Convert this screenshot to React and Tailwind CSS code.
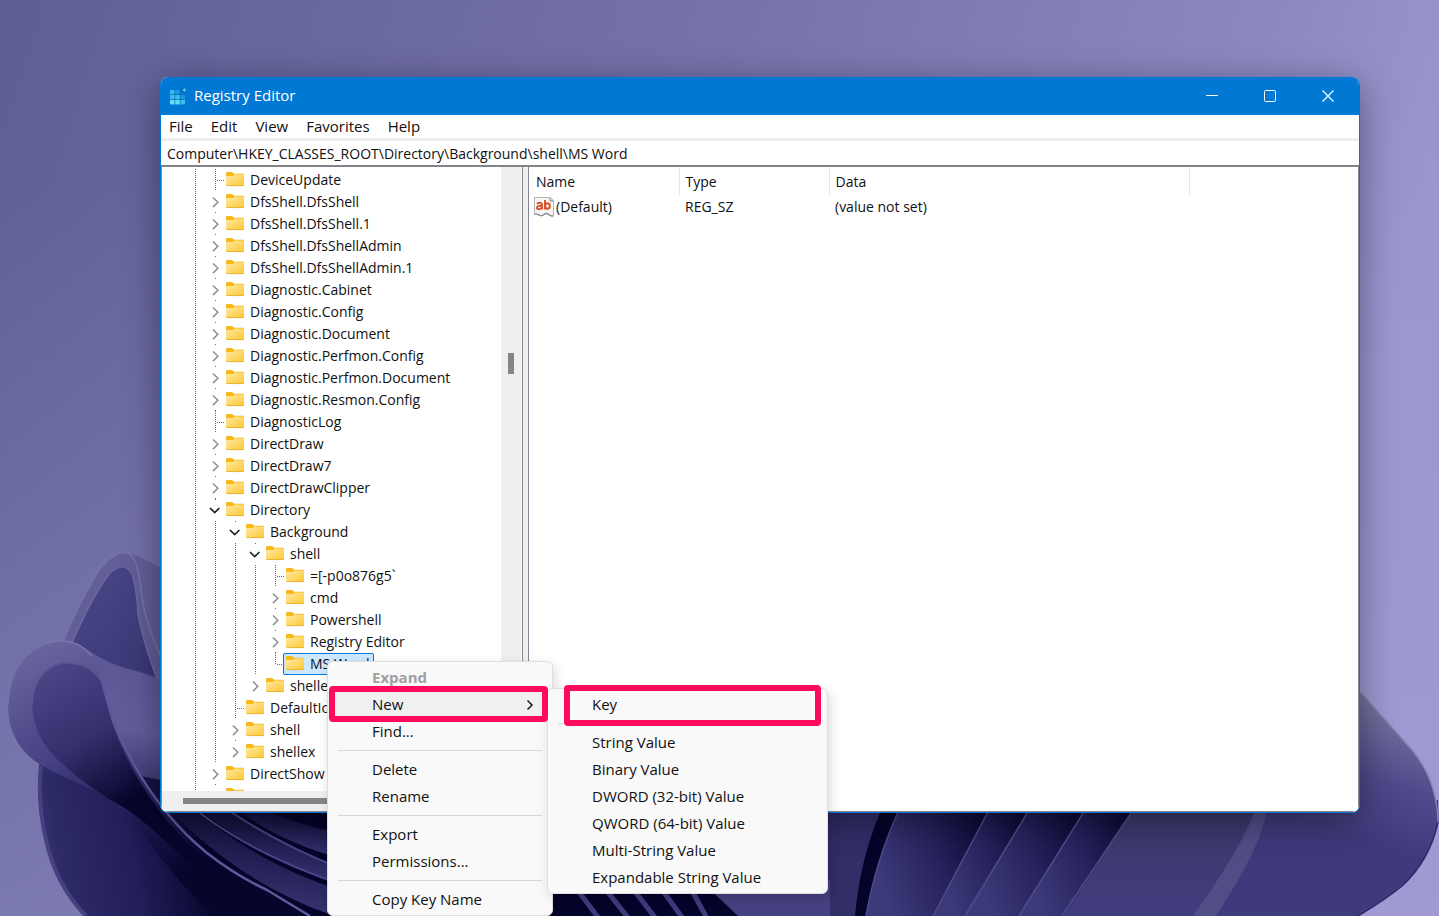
import React, { useState } from "react";

// Rows of the key tree. "level" is the depth below the root line, "last" marks
// the last child, whose guide line stops at the row.
const treeRows = [
  { name: "DeviceUpdate", level: 0, kind: "leaf" },
  { name: "DfsShell.DfsShell", level: 0, kind: "closed" },
  { name: "DfsShell.DfsShell.1", level: 0, kind: "closed" },
  { name: "DfsShell.DfsShellAdmin", level: 0, kind: "closed" },
  { name: "DfsShell.DfsShellAdmin.1", level: 0, kind: "closed" },
  { name: "Diagnostic.Cabinet", level: 0, kind: "closed" },
  { name: "Diagnostic.Config", level: 0, kind: "closed" },
  { name: "Diagnostic.Document", level: 0, kind: "closed" },
  { name: "Diagnostic.Perfmon.Config", level: 0, kind: "closed" },
  { name: "Diagnostic.Perfmon.Document", level: 0, kind: "closed" },
  { name: "Diagnostic.Resmon.Config", level: 0, kind: "closed" },
  { name: "DiagnosticLog", level: 0, kind: "leaf" },
  { name: "DirectDraw", level: 0, kind: "closed" },
  { name: "DirectDraw7", level: 0, kind: "closed" },
  { name: "DirectDrawClipper", level: 0, kind: "closed" },
  { name: "Directory", level: 0, kind: "open" },
  { name: "Background", level: 1, kind: "open" },
  { name: "shell", level: 2, kind: "open" },
  { name: "=[-p0o876g5`", level: 3, kind: "leaf" },
  { name: "cmd", level: 3, kind: "closed" },
  { name: "Powershell", level: 3, kind: "closed" },
  { name: "Registry Editor", level: 3, kind: "closed" },
  { name: "MS Word", level: 3, kind: "leaf", last: true },
  { name: "shellex", level: 2, kind: "closed", last: true },
  { name: "DefaultIcon", level: 1, kind: "leaf" },
  { name: "shell", level: 1, kind: "closed" },
  { name: "shellex", level: 1, kind: "closed", last: true },
  { name: "DirectShow", level: 0, kind: "closed" },
  { name: "", level: 0, kind: "closed" },
];

const contextMenu = [
  { label: "Expand", disabled: true },
  { label: "New", arrow: true },
  { label: "Find..." },
  null,
  { label: "Delete" },
  { label: "Rename" },
  null,
  { label: "Export" },
  { label: "Permissions..." },
  null,
  { label: "Copy Key Name" },
];

const newMenu = [
  { label: "Key" },
  null,
  { label: "String Value" },
  { label: "Binary Value" },
  { label: "DWORD (32-bit) Value" },
  { label: "QWORD (64-bit) Value" },
  { label: "Multi-String Value" },
  { label: "Expandable String Value" },
];

const Guide = ({ kind, last }) => (
  <svg width="20" height="22" viewBox="0 0 20 22" fill="none" className="shrink-0">
    {kind === "line" && (
      <path d="M10.5 0V22" stroke="#6b6b6b" strokeDasharray="1 1" />
    )}
    {kind === "leaf" && (
      <>
        <path d={last ? "M10.5 0V12" : "M10.5 0V22"} stroke="#6b6b6b" strokeDasharray="1 1" />
        <path d="M12 11.5H19" stroke="#6b6b6b" strokeDasharray="1 1" />
      </>
    )}
    {kind === "closed" && (
      <>
        {!last && <path d="M10.5 21V22" stroke="#6b6b6b" />}
        <path d="M8 6.5L12.8 11.3L8 16.1" stroke="#8f8f8f" strokeWidth="1.5" />
      </>
    )}
    {kind === "open" && (
      <>
        <path d="M10.5 0V1" stroke="#6b6b6b" />
        <path d="M5 9L9.7 13.5L14.4 9" stroke="#1f1f2b" strokeWidth="1.7" />
      </>
    )}
  </svg>
);

const FolderIcon = () => (
  <svg width="18" height="18" viewBox="0 0 18 18" className="shrink-0">
    <defs>
      <linearGradient id="folder" x1="0" y1="0" x2="1" y2="1">
        <stop offset="0" stopColor="#ffe9a3" />
        <stop offset="1" stopColor="#fdc934" />
      </linearGradient>
    </defs>
    <path d="M0 2.2Q0 1 1.2 1H6.2L8 2.7H17Q18 2.7 18 3.7V6H0Z" fill="#f7b81c" />
    <path d="M0 5H7L8.6 3.6H17.4Q18 3.6 18 4.4V14Q18 15 17 15H1Q0 15 0 14Z" fill="url(#folder)" />
    <path d="M0.5 14.6H17.5" stroke="#e3a92a" strokeWidth="0.8" />
  </svg>
);

const RegistryIcon = () => (
  <svg width="18" height="18" viewBox="0 0 18 18" className="shrink-0">
    <rect x="1" y="3" width="15" height="14.5" fill="#0a5ea8" />
    <g fill="#35bdf2">
      <rect x="1" y="3" width="4.6" height="4.4" />
      <rect x="1" y="8" width="4.6" height="4.4" />
      <rect x="1" y="13" width="4.6" height="4.5" fill="#5fdcff" />
      <rect x="6.2" y="3" width="4.6" height="4.4" fill="#1c97d8" />
      <rect x="6.2" y="8" width="4.6" height="4.4" />
      <rect x="6.2" y="13" width="4.6" height="4.5" fill="#5fdcff" />
      <rect x="11.4" y="8" width="4.6" height="4.4" fill="#1c97d8" />
      <rect x="11.4" y="13" width="4.6" height="4.5" />
    </g>
    <path d="M11.4 3H16V7.400H11.400Z" fill="#0078d4" />
    <path d="M15 0L18 3L15 6L12 3Z" fill="#0a5ea8" />
    <path d="M15.3 1L17.200 3L15.300 5L13.400 3Z" fill="#4ccdf7" />
  </svg>
);

const StringValueIcon = () => (
  <svg width="20" height="20" viewBox="0 0 20 20" className="shrink-0">
    <path
      d="M0.5 0.5H16L19.5 3.5V19Q17 19.5 14.5 17.5Q12 15.5 10 17.5Q7.5 20 4.5 18Q2.5 16.5 0.5 17.5Z"
      fill="#f6f6f6"
      stroke="#b3b3b3"
    />
    <path d="M16 0.5V4H19.5" fill="#d9d9d9" stroke="#8d8d8d" />
    <path d="M1 17.5Q3 16.5 5 18Q7.500 19.5 10 17.5Q12 15.5 14.5 17.5Q17 19.5 19 19" fill="none" stroke="#8d8d8d" strokeWidth="1.4" />
    <g fill="none" stroke="#d9532c" strokeWidth="2">
      <path d="M2.800 6.600Q8 4.500 8 8V12.500M8 8.800Q3 8.500 3 10.800Q3 12.500 5 12.300Q7.500 12 8 10" />
      <path d="M11 3V12.500M11 9Q11.500 6.200 13.500 6.200Q15.800 6.200 15.800 9Q15.800 11.800 13.500 11.800Q11.500 11.800 11 9" />
    </g>
  </svg>
);

const Wallpaper = () => (
  <svg
    className="absolute inset-0 h-full w-full"
    viewBox="0 0 1439 916"
    preserveAspectRatio="xMidYMax slice"
    aria-hidden="true"
  >
    <defs>
      <linearGradient id="sky" x1="0" y1="0" x2="1" y2="0.2">
        <stop offset="0" stopColor="#5e5e96" />
        <stop offset="0.5" stopColor="#7673aa" />
        <stop offset="0.85" stopColor="#8c87bf" />
        <stop offset="1" stopColor="#9b96cf" />
      </linearGradient>
      <linearGradient id="glow" x1="0" y1="0" x2="0" y2="1">
        <stop offset="0.2" stopColor="#a9a4dc" stopOpacity="0" />
        <stop offset="1" stopColor="#a9a4dc" stopOpacity="0.3" />
      </linearGradient>
      <linearGradient id="back" x1="0" y1="0" x2="0.6" y2="1">
        <stop offset="0" stopColor="#4b4888" />
        <stop offset="1" stopColor="#353272" />
      </linearGradient>
      <linearGradient id="rim" gradientUnits="userSpaceOnUse" x1="60" y1="640" x2="170" y2="880">
        <stop offset="0" stopColor="#67649e" />
        <stop offset="0.4" stopColor="#464283" />
        <stop offset="0.75" stopColor="#1c1950" />
        <stop offset="1" stopColor="#06052c" />
      </linearGradient>
      <linearGradient id="cup" gradientUnits="userSpaceOnUse" x1="50" y1="670" x2="130" y2="800">
        <stop offset="0" stopColor="#4a4685" />
        <stop offset="0.5" stopColor="#35316f" />
        <stop offset="1" stopColor="#06052c" />
      </linearGradient>
      <linearGradient id="low" gradientUnits="userSpaceOnUse" x1="40" y1="880" x2="210" y2="850">
        <stop offset="0" stopColor="#38346f" />
        <stop offset="0.15" stopColor="#2d2a68" />
        <stop offset="0.55" stopColor="#211e59" />
        <stop offset="1" stopColor="#05042a" />
      </linearGradient>
      <linearGradient id="sheet" gradientUnits="userSpaceOnUse" x1="150" y1="670" x2="125" y2="790">
        <stop offset="0" stopColor="#5d5997" />
        <stop offset="0.5" stopColor="#625e9c" />
        <stop offset="1" stopColor="#37336f" />
      </linearGradient>
      <linearGradient id="fold" x1="0" y1="0.3" x2="1" y2="0">
        <stop offset="0" stopColor="#3d3a7a" />
        <stop offset="0.5" stopColor="#25225c" />
        <stop offset="1" stopColor="#06052c" />
      </linearGradient>
      <linearGradient id="plain" x1="0" y1="0" x2="0" y2="1">
        <stop offset="0" stopColor="#3b3868" />
        <stop offset="1" stopColor="#413d7e" />
      </linearGradient>
      <linearGradient id="arc" x1="0.6" y1="0" x2="0.4" y2="1">
        <stop offset="0" stopColor="#0a0830" />
        <stop offset="1" stopColor="#3d397b" />
      </linearGradient>
      <linearGradient id="wing" gradientUnits="userSpaceOnUse" x1="1400" y1="710" x2="1360" y2="840">
        <stop offset="0" stopColor="#77739f" />
        <stop offset="0.55" stopColor="#4e4a8b" />
        <stop offset="1" stopColor="#3e3a7b" />
      </linearGradient>
    </defs>
    <rect width="1439" height="916" fill="url(#sky)" />
    <rect width="1439" height="916" fill="url(#glow)" />

    {/* right petal */}
    <path
      d="M1060 916L1130 800L1300 640Q1340 670 1362 694L1412 750Q1437 780 1438 822Q1430 860 1402 886Q1385 900 1358 916Z"
      fill="url(#wing)"
    />
    <path d="M1060 916L1133 800H1262Q1250 850 1193 916Z" fill="url(#plain)" />
    <path d="M1437 800L1438 822Q1430 860 1402 886Q1385 900 1358 916" fill="none" stroke="#2f2b68" strokeWidth="1.5" />
    <path d="M1362 694L1412 750Q1437 780 1438 822" fill="none" stroke="#8682b2" strokeWidth="1.5" />
    <path d="M1254 813H1266Q1262 845 1216 916H1193Q1240 850 1254 813Z" fill="#514d87" />

    {/* folds under the window */}
    <path d="M150 800H1138L1062 916H150Z" fill="#04032a" />
    <path d="M828 813H880Q860 860 855 916H780Q810 860 828 813Z" fill="#312e68" />
    <path d="M899 810Q876 860 866 916H935L989 810Z" fill="url(#fold)" />
    <path d="M989 810L933 916H967L1029 810Z" fill="url(#fold)" />
    <path d="M1029 810L965 916H1021L1085 810Z" fill="url(#fold)" />
    <path d="M1085 810L1019 916H1064L1133 810Z" fill="url(#fold)" />
    <g stroke="#4f4b8c" strokeWidth="1.5" fill="none">
      <path d="M899 810Q876 860 866 916" />
      <path d="M989 810L933 916" />
      <path d="M1029 810L965 916" />
      <path d="M1085 810L1019 916" />
      <path d="M1133 810L1062 916" />
    </g>
    <g stroke="#3f3b7c" strokeWidth="5" fill="none">
      <path d="M570 880L600 920" />
      <path d="M598 880L630 920" />
      <path d="M626 880L657 920" />
      <path d="M655 880L684 920" />
      <path d="M686 880L708 920" />
    </g>
    <path d="M700 880L738 916H830V880Z" fill="#454180" />

    {/* back petal on the left */}
    <path d="M62 645Q75 612 96 575Q112 550 128 553Q138 556 150 562L165 570V710L90 660Z" fill="#615e98" />
    <path d="M72 643Q92 596 110 573Q124 560 132 574Q137 590 138 615Q145 650 165 700L165 760Z" fill="url(#back)" />
    <path d="M63 642Q75 612 96 575Q112 550 128 553Q138 558 141 590Q145 625 165 665" fill="none" stroke="#7673aa" strokeWidth="1.5" />
    <path d="M72 643Q92 596 110 573Q124 560 132 574Q137 590 138 615Q145 650 165 700" fill="none" stroke="#6a66a1" strokeWidth="1.5" />
    <path d="M88 650Q105 662 125 668Q150 674 165 682V820L120 760Z" fill="url(#sheet)" />

    {/* lower petal */}
    <path d="M40 755Q36 800 45 840Q55 885 84 916H340V840L160 780Z" fill="url(#low)" />
    <path d="M41 766Q37 800 46 840Q56 885 86 916" fill="none" stroke="#454180" strokeWidth="4" />

    {/* front petal */}
    <path
      d="M8 705Q9 660 42 645Q72 633 92 656Q100 668 103 683Q108 705 113 720Q120 740 133 763Q148 790 167 813Q185 835 207 853Q235 875 267 890L310 916H215Q190 895 173 873Q160 857 150 843Q140 828 130 817Q120 806 107 797L50 770Q8 750 8 705Z"
      fill="url(#rim)"
    />
    <path
      d="M32 705Q34 670 62 663Q90 662 100 680Q106 700 113 726Q122 750 133 770Q148 797 167 821Q185 842 207 860L270 900Q220 890 185 860Q150 825 125 808Q90 790 58 760Q34 738 32 705Z"
      fill="url(#cup)"
    />
    <path d="M8 705Q9 660 42 645Q72 633 92 656" fill="none" stroke="#7774ac" strokeWidth="1.5" />
    <path d="M92 656Q100 668 103 683Q108 705 113 720Q120 740 133 763Q148 790 167 813Q185 835 207 853Q235 875 267 890L310 916" fill="none" stroke="#5e5a9a" strokeWidth="2.5" />
    <path d="M32 705Q34 670 62 663Q90 662 100 680" fill="none" stroke="#5a5693" strokeWidth="1.5" />

    {/* ridges running to the right */}
    <path d="M165 805Q240 885 340 918V890Q260 865 195 810Z" fill="url(#arc)" />
    <path d="M200 810Q255 855 340 884V868Q280 845 228 810Z" fill="url(#arc)" />
    <path d="M238 810Q280 842 340 858V833Q300 825 262 810Z" fill="url(#arc)" />
    <g fill="none" stroke="#4a4689" strokeWidth="2">
      <path d="M200 813Q255 855 340 884" />
      <path d="M228 810Q280 845 340 868" />
    </g>
  </svg>
);

const MenuList = ({ items, active }) => (
  <>
    {items.map((item, index) =>
      item === null ? (
        <div key={index} role="separator" className="flex h-[11px] items-center px-2.5">
          <div className="h-px w-full bg-[#d6d6d6]"></div>
        </div>
      ) : (
        <button
          key={index}
          type="button"
          role="menuitem"
          disabled={item.disabled}
          className={
            item.disabled
              ? "flex h-[27px] w-full items-center pl-11 font-bold text-[#a0a0a0]"
              : item.label === active
                ? "flex h-[27px] w-full items-center justify-between bg-[#f0f0f0] pr-[18px] pl-11"
                : "flex h-[27px] w-full items-center pl-11 hover:bg-[#f0f0f0]"
          }
        >
          {item.label}
          {item.arrow && (
            <svg width="8" height="12" viewBox="0 0 8 12" fill="none" stroke="#1a1a1a" strokeWidth="1.5">
              <path d="M1.5 1.5L6 6L1.5 10.5" />
            </svg>
          )}
        </button>
      )
    )}
  </>
);

const KeyTree = ({ selected, onSelect }) => (
  <ul className="min-h-0 flex-1 overflow-hidden pt-0.5 pl-[23px]">
    {treeRows.map((row, index) => (
      <li key={index} className="flex h-[22px] items-center whitespace-nowrap">
        {Array.from({ length: row.level + 1 }, (_, i) => (
          <Guide key={i} kind="line" />
        ))}
        <Guide kind={row.kind} last={row.last} />
        <button
          type="button"
          onClick={() => onSelect(index)}
          className={
            selected === index
              ? "-ml-0.5 flex h-[22px] items-center gap-1.5 rounded-xs border border-[#0078d4] bg-[#cce8ff] pr-[3px] pl-0.5"
              : "-ml-0.5 flex h-[22px] items-center gap-1.5 border border-transparent pr-[3px] pl-0.5"
          }
        >
          <FolderIcon />
          {row.name}
        </button>
      </li>
    ))}
  </ul>
);

const App = () => {
  const [selected, setSelected] = useState(22);
  const [path, setPath] = useState(
    "Computer\\HKEY_CLASSES_ROOT\\Directory\\Background\\shell\\MS Word"
  );

  return (
    <div className="relative flex h-screen overflow-hidden pt-[77px] pr-[79px] pb-[103px] pl-40 font-['Open_Sans','Noto_Sans',sans-serif] text-sm text-[#111]">
      <Wallpaper />

      {/* Editor window */}
      <main className="relative flex min-w-0 flex-1 flex-col overflow-hidden rounded-lg border border-t-0 border-[#0078d4] bg-white shadow-[0_8px_36px_rgba(0,0,0,0.4)]">
        <header className="flex h-[38px] shrink-0 items-center bg-[#0078d4] pr-0.5 pl-2 text-[15px] text-white">
          <RegistryIcon />
          <h1 className="ml-[7px] flex-1">Registry Editor</h1>
          <button type="button" aria-label="Minimize" className="flex h-full w-[58px] items-center justify-center">
            <svg width="12" height="12" viewBox="0 0 12 12" stroke="#fff">
              <path d="M0 5.5H12" />
            </svg>
          </button>
          <button type="button" aria-label="Maximize" className="flex h-full w-[58px] items-center justify-center">
            <svg width="12" height="12" viewBox="0 0 12 12" stroke="#fff" fill="none">
              <rect x="0.5" y="0.5" width="11" height="11" rx="1" />
            </svg>
          </button>
          <button type="button" aria-label="Close" className="flex h-full w-[58px] items-center justify-center">
            <svg width="12" height="12" viewBox="0 0 12 12" stroke="#fff" strokeWidth="1.2">
              <path d="M0.5 0.5L11.5 11.5M11.5 0.5L0.5 11.5" />
            </svg>
          </button>
        </header>

        <nav className="flex h-[26px] shrink-0 items-center gap-[18px] border-b-3 border-[#eee] pl-2 text-[15px]">
          <button type="button">File</button>
          <button type="button">Edit</button>
          <button type="button">View</button>
          <button type="button">Favorites</button>
          <button type="button">Help</button>
        </nav>

        <input
          type="text"
          aria-label="Key path"
          value={path}
          onChange={(e) => setPath(e.target.value)}
          className="h-[26px] w-full shrink-0 border-b-2 border-[#83838b] pl-1.5 outline-none"
        />

        <div className="flex min-h-0 flex-1 bg-[#f0f0f0]">
          {/* Key tree */}
          <section className="flex w-[362px] shrink-0 flex-col border-x border-b border-[#838391] bg-white">
            <div className="flex min-h-0 flex-1">
              <KeyTree selected={selected} onSelect={setSelected} />
              <div className="mr-px w-5 bg-[#efefef] pt-[186px]">
                <div className="mx-auto h-[21px] w-1.5 bg-[#858585]"></div>
              </div>
            </div>
            <div className="flex h-5 items-center bg-[#efefef] pl-[21px]">
              <div className="h-1.5 w-[220px] bg-[#858585]"></div>
            </div>
          </section>

          {/* Values of the selected key */}
          <section className="ml-[5px] min-w-0 flex-1 border-x border-b border-[#838391] bg-white pt-0.5">
            <table className="w-full table-fixed text-left">
              <thead>
                <tr className="h-[26px]">
                  <th className="w-[150px] border-r border-[#e5e5e5] pl-[7px] font-normal">Name</th>
                  <th className="w-[150px] border-r border-[#e5e5e5] pl-1.5 font-normal">Type</th>
                  <th className="w-[360px] border-r border-[#e5e5e5] pl-1.5 font-normal">Data</th>
                  <th></th>
                </tr>
              </thead>
              <tbody>
                <tr className="h-6">
                  <td className="pl-[5px]">
                    <div className="flex items-center gap-0.5">
                      <StringValueIcon />
                      (Default)
                    </div>
                  </td>
                  <td className="pl-1.5">REG_SZ</td>
                  <td className="pl-1.5">(value not set)</td>
                  <td></td>
                </tr>
              </tbody>
            </table>
          </section>
        </div>
      </main>

      {/* Context menu of the selected key */}
      <div
        role="menu"
        className="absolute top-[661px] left-[327px] w-[226px] rounded-md border border-[#dedede] bg-[#f9f9f9] py-0.5 text-[15px] shadow-[2px_4px_12px_rgba(0,0,0,0.15)]"
      >
        <MenuList items={contextMenu} active="New" />
      </div>
      <div
        role="menu"
        className="absolute top-[688px] left-[547px] w-[281px] rounded-md border border-[#dedede] bg-[#f9f9f9] py-0.5 text-[15px] shadow-[2px_4px_12px_rgba(0,0,0,0.15)]"
      >
        <MenuList items={newMenu} />
      </div>

      {/* Callouts around the two steps */}
      <div className="pointer-events-none absolute top-[686px] left-[329px] h-9 w-[219px] rounded-sm border-6 border-[#ff0b5b]"></div>
      <div className="pointer-events-none absolute top-[685px] left-[564px] h-[41px] w-[257px] rounded-sm border-6 border-[#ff0b5b]"></div>
    </div>
  );
};

export default App;
